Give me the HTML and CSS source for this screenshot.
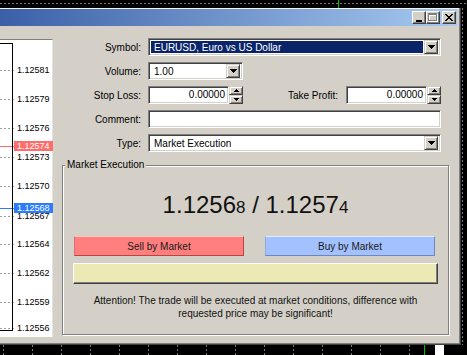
FILE: index.html
```html
<!DOCTYPE html>
<html lang="en">
<head>
    <meta charset="UTF-8">
    <meta name="viewport" content="width=device-width, initial-scale=1.0">
    <title>Order</title>
    <link rel="stylesheet" href="styles.css">
</head>
<body>
    <!-- chart behind the dialog -->
    <div class="chart-top">
        <span class="bar-green" style="left: 338px"></span>
    </div>

    <div class="desk">
        <div class="dialog">
            <div class="caption">
                <button class="cap-btn">
                    <svg width="8" height="8" viewBox="0 0 8 8"><path d="M1 6h6v2H1z" fill="#000"/></svg>
                </button>
                <button class="cap-btn" disabled>
                    <svg width="10" height="9" viewBox="0 0 10 9">
                        <path d="M1 1h9v2H1z M1 3h1v6H1z M9 3h1v6H9z M1 8h9v1H1z" fill="#fff"/>
                        <path d="M0 0h9v2H0z M0 2h1v6H0z M8 2h1v6H8z M0 7h9v1H0z" fill="#808080"/>
                    </svg>
                </button>
                <button class="cap-btn cap-close">
                    <svg width="8" height="7" viewBox="0 0 8 7"><path d="M0 0h2v1H0z M6 0h2v1H6z M1 1h2v1H1z M5 1h2v1H5z M2 2h4v1H2z M3 3h2v1H3z M2 4h4v1H2z M1 5h2v1H1z M5 5h2v1H5z M0 6h2v1H0z M6 6h2v1H6z" fill="#000"/></svg>
                </button>
            </div>

            <div class="client">
                <!-- tick chart -->
                <div class="tick-chart">
                    <div class="plot"></div>
                    <div class="level" style="top: 25px"><span>1.12581</span></div>
                    <div class="level" style="top: 54px"><span>1.12579</span></div>
                    <div class="level" style="top: 83px"><span>1.12576</span></div>
                    <div class="level" style="top: 112px"><span>1.12573</span></div>
                    <div class="level" style="top: 141px"><span>1.12570</span></div>
                    <div class="level" style="top: 171px"><span>1.12567</span></div>
                    <div class="level" style="top: 199px"><span>1.12564</span></div>
                    <div class="level" style="top: 228px"><span>1.12562</span></div>
                    <div class="level" style="top: 257px"><span>1.12559</span></div>
                    <div class="level" style="top: 283px"><span>1.12556</span></div>
                    <div class="level ask" style="top: 101px"><span>1.12574</span></div>
                    <div class="level bid" style="top: 163px"><span>1.12568</span></div>
                </div>

                <div class="order">
                    <div class="fields">
                        <label>Symbol:</label>
                        <div class="box combo">
                            <span class="combo-text selected">EURUSD, Euro vs US Dollar</span>
                            <span class="drop-btn">
                                <svg width="7" height="4" viewBox="0 0 7 4"><path d="M0 0h7v1H0z M1 1h5v1H1z M2 2h3v1H2z M3 3h1v1H3z" fill="#000"/></svg>
                            </span>
                        </div>

                        <label>Volume:</label>
                        <div class="box combo volume">
                            <span class="combo-text">1.00</span>
                            <span class="drop-btn">
                                <svg width="7" height="4" viewBox="0 0 7 4"><path d="M0 0h7v1H0z M1 1h5v1H1z M2 2h3v1H2z M3 3h1v1H3z" fill="#000"/></svg>
                            </span>
                        </div>

                        <label>Stop Loss:</label>
                        <div class="sl-tp">
                            <div class="spin">
                                <div class="box spin-input">0.00000</div>
                                <div class="spin-btns">
                                    <span class="spin-btn"><svg width="5" height="3" viewBox="0 0 5 3"><path d="M2 0h1v1H2z M1 1h3v1H1z M0 2h5v1H0z" fill="#000"/></svg></span>
                                    <span class="spin-btn"><svg width="5" height="3" viewBox="0 0 5 3"><path d="M0 0h5v1H0z M1 1h3v1H1z M2 2h1v1H2z" fill="#000"/></svg></span>
                                </div>
                            </div>
                            <label class="tp-label">Take Profit:</label>
                            <div class="spin">
                                <div class="box spin-input">0.00000</div>
                                <div class="spin-btns">
                                    <span class="spin-btn"><svg width="5" height="3" viewBox="0 0 5 3"><path d="M2 0h1v1H2z M1 1h3v1H1z M0 2h5v1H0z" fill="#000"/></svg></span>
                                    <span class="spin-btn"><svg width="5" height="3" viewBox="0 0 5 3"><path d="M0 0h5v1H0z M1 1h3v1H1z M2 2h1v1H2z" fill="#000"/></svg></span>
                                </div>
                            </div>
                        </div>

                        <label>Comment:</label>
                        <div class="box"></div>

                        <label>Type:</label>
                        <div class="box combo">
                            <span class="combo-text">Market Execution</span>
                            <span class="drop-btn">
                                <svg width="7" height="4" viewBox="0 0 7 4"><path d="M0 0h7v1H0z M1 1h5v1H1z M2 2h3v1H2z M3 3h1v1H3z" fill="#000"/></svg>
                            </span>
                        </div>
                    </div>

                    <div class="group">
                        <span class="group-title">Market Execution</span>
                        <div class="quote">1.1256<small>8</small> / 1.1257<small>4</small></div>
                        <div class="trade-btns">
                            <button class="trade sell">Sell by Market</button>
                            <button class="trade buy">Buy by Market</button>
                        </div>
                        <div class="pending-bar"></div>
                        <p class="attention">Attention! The trade will be executed at market conditions, difference with<br>requested price may be significant!</p>
                    </div>
                </div>
            </div>
        </div>
        <div class="chart-side"></div>
    </div>

    <div class="chart-bottom">
        <span class="bar-green" style="left: 424px"></span>
        <span class="bar-white" style="left: 435px"></span>
    </div>
</body>
</html>
```

FILE: styles.css
```css
body {
    margin: 0;
    width: 467px;
    height: 355px;
    overflow: hidden;
    background: #000;
    font-family: "Liberation Sans", Arial, sans-serif;
    font-size: 10px;
    color: #000;
}

/* chart around the dialog */
.chart-top {
    position: relative;
    height: 8px;
    background: repeating-linear-gradient(90deg, #7a7a7a 0 2px, transparent 2px 4px) 0 3px / 100% 1px no-repeat;
}

.chart-bottom {
    position: relative;
    height: 10px;
    background:
        repeating-linear-gradient(180deg, transparent 0 2px, #000 2px 4px),
        repeating-linear-gradient(90deg, transparent 0 3px, #7a7a7a 3px 4px, transparent 4px 29px);
}

.bar-green {
    position: absolute;
    top: 0;
    bottom: 0;
    width: 1px;
    background: #00c000;
}

.bar-white {
    position: absolute;
    top: 0;
    bottom: 0;
    width: 9px;
    background: #fff;
}

.desk {
    display: flex;
    height: 337px;
}

.chart-side {
    flex: 1;
    background: repeating-linear-gradient(180deg, #7a7a7a 0 2px, transparent 2px 4px) 1px 0 / 1px 100% no-repeat;
}

/* dialog window */
.dialog {
    box-sizing: border-box;
    width: 461px;
    height: 337px;
    padding: 1px 3px 0 0;
    background: #d4d0c8;
    border-right: 1px solid #404040;
    border-bottom: 1px solid #404040;
    box-shadow: inset -1px -1px #808080, inset 0 1px #f4f3ef;
}

.caption {
    display: flex;
    justify-content: flex-end;
    align-items: center;
    height: 17px;
    padding-right: 1px;
    background: linear-gradient(90deg, #3b60a7, #a6caf0);
}

.cap-btn {
    box-sizing: border-box;
    display: flex;
    align-items: center;
    justify-content: center;
    width: 14px;
    height: 13px;
    padding: 0;
    background: #d4d0c8;
    border: 1px solid;
    border-color: #fff #404040 #404040 #fff;
    box-shadow: inset -1px -1px #808080;
}

.cap-close {
    margin-left: 2px;
}

.client {
    display: flex;
    padding-top: 12px;
}

/* tick chart */
.tick-chart {
    position: relative;
    box-sizing: border-box;
    width: 53px;
    height: 298px;
    margin-top: 1px;
    background: #fff;
    border-top: 1px solid #808080;
    border-right: 1px solid #e4e2dc;
}

.plot {
    position: relative;
    z-index: 1;
    box-sizing: border-box;
    width: 13px;
    height: 288px;
    margin-top: 3px;
    border: 1px solid #000;
    border-left: none;
}

.level {
    position: absolute;
    left: 0;
    display: flex;
    align-items: center;
    height: 10px;
}

.level::before {
    content: "";
    width: 14px;
    height: 1px;
    background: repeating-linear-gradient(90deg, #a0a0a0 0 2px, transparent 2px 4px);
}

.level span {
    padding: 0 3px;
    font-size: 9px;
    line-height: 10px;
}

.level.ask::before,
.level.ask span {
    background: #ff6c6c;
}

.level.bid::before,
.level.bid span {
    background: #2b7cff;
}

.level.ask span,
.level.bid span {
    color: #fff;
}

/* order form */
.order {
    flex: 1;
}

.fields {
    display: grid;
    grid-template-columns: 88px 1fr;
    grid-auto-rows: 18px;
    column-gap: 7px;
    row-gap: 6px;
    padding-right: 16px;
}

.fields label {
    align-self: center;
    text-align: right;
}

.box {
    box-sizing: border-box;
    height: 18px;
    background: #fff;
    border: 1px solid;
    border-color: #808080 #fff #fff #808080;
    box-shadow: inset 1px 1px #404040, inset -1px -1px #d4d0c8;
}

.combo {
    display: flex;
    align-items: center;
    padding: 2px 2px 2px 2px;
}

.combo-text {
    flex: 1;
    align-self: stretch;
    display: flex;
    align-items: center;
    margin-right: 1px;
    padding-left: 3px;
}

.combo-text.selected {
    background: #0a246a;
    color: #fff;
}

.volume {
    width: 95px;
}

.drop-btn {
    box-sizing: border-box;
    display: flex;
    align-items: center;
    justify-content: center;
    width: 14px;
    height: 14px;
    background: #d4d0c8;
    border: 1px solid;
    border-color: #d4d0c8 #404040 #404040 #d4d0c8;
    box-shadow: inset 1px 1px #fff, inset -1px -1px #808080;
}

.sl-tp {
    display: flex;
    align-items: center;
}

.spin {
    display: flex;
    width: 95px;
}

.spin-input {
    flex: 1;
    padding-right: 3px;
    text-align: right;
    line-height: 16px;
}

.spin-btns {
    display: flex;
    flex-direction: column;
    width: 14px;
}

.spin-btn {
    box-sizing: border-box;
    display: flex;
    align-items: center;
    justify-content: center;
    height: 9px;
    background: #d4d0c8;
    border: 1px solid;
    border-color: #d4d0c8 #404040 #404040 #d4d0c8;
    box-shadow: inset 1px 1px #fff, inset -1px -1px #808080;
}

.tp-label {
    flex: 1;
    margin-right: 8px;
}

/* market execution group */
.group {
    position: relative;
    box-sizing: border-box;
    height: 170px;
    margin: 13px 8px 0 9px;
    padding: 25px 11px 0 11px;
    border: 1px solid #808080;
    box-shadow: inset 1px 1px #fff, 1px 1px #fff;
}

.group-title {
    position: absolute;
    top: -7px;
    left: 2px;
    padding: 0 2px;
    line-height: 12px;
    background: #d4d0c8;
}

.quote {
    font-size: 24px;
    line-height: 28px;
    text-align: center;
    color: #111;
}

.quote small {
    font-size: 17px;
}

.trade-btns {
    display: flex;
    gap: 21px;
    margin-top: 14px;
}

.trade {
    box-sizing: border-box;
    width: 170px;
    height: 20px;
    padding: 0;
    font-family: inherit;
    font-size: 10px;
    color: #1a1a1a;
    border: 1px solid;
}

.sell {
    background: #ff7f7f;
    border-color: #ffc4c4 #b84444 #b84444 #e06a6a;
}

.buy {
    background: #a3c1ff;
    border-color: #e0eaff #6f88bc #6f88bc #8ea8e0;
}

.pending-bar {
    box-sizing: border-box;
    height: 21px;
    margin: 7px -1px 0;
    background: #ece9b4;
    border: 1px solid;
    border-color: #fff #404040 #404040 #fff;
    box-shadow: inset -1px -1px #808080;
}

.attention {
    margin: 10px 0 0;
    line-height: 13px;
    text-align: center;
    color: #111;
}
```
